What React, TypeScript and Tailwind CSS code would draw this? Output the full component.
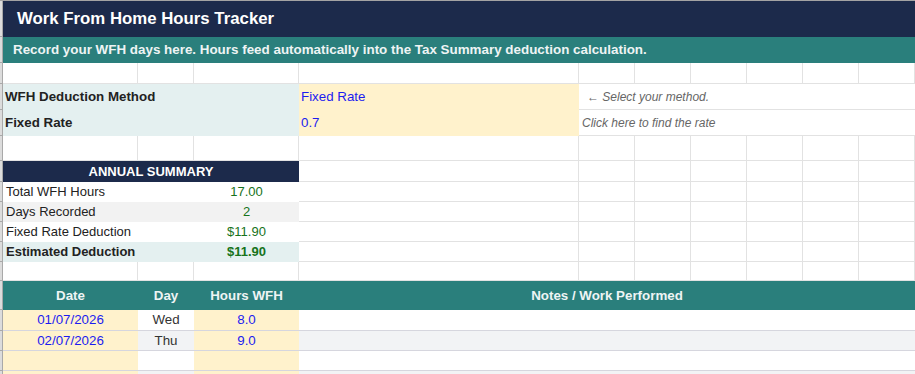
import type { ReactNode } from "react";

const GRID = "border-r border-b border-[#e2e2e2]";

function Frame() {
  // cut-off row header strip on the left edge
  return <div className="bg-[#dcdcdc] border-r border-b border-[#a9a9a9]" />;
}

function Blank() {
  return <div className={GRID} />;
}

function RestGrid() {
  // columns E..J
  return (
    <>
      <Blank />
      <Blank />
      <Blank />
      <Blank />
      <Blank />
      <Blank />
    </>
  );
}

function EmptyRow() {
  return (
    <>
      <Frame />
      <Blank />
      <Blank />
      <Blank />
      <Blank />
      <RestGrid />
    </>
  );
}

function SummaryRow({
  label,
  value,
  bg,
  bold,
}: {
  label: string;
  value: string;
  bg: string;
  bold?: boolean;
}) {
  return (
    <>
      <Frame />
      <div className={`col-span-2 flex items-center pl-[3px] text-[13px] text-[#222] ${bg} ${bold ? "font-bold" : ""}`}>
        {label}
      </div>
      <div className={`flex items-center justify-center text-[13px] text-[#17731b] ${bg} ${bold ? "font-bold" : ""}`}>
        {value}
      </div>
      <Blank />
      <RestGrid />
    </>
  );
}

function DataRow({
  date,
  day,
  hours,
  alt,
}: {
  date?: string;
  day?: string;
  hours?: string;
  alt?: boolean;
}) {
  const line = "border-b border-[#d6d6de]";
  const plain = alt ? "bg-[#f2f3f5]" : "bg-white";
  return (
    <>
      <Frame />
      <div className={`flex items-center justify-center bg-[#fff2cc] text-[13.33px] text-[#1c1cf0] ${line}`}>{date}</div>
      <div className={`flex items-center justify-center text-[13.33px] text-[#333] ${plain} ${line}`}>{day}</div>
      <div className={`flex items-center justify-center bg-[#fff2cc] text-[13.33px] text-[#1c1cf0] ${line}`}>{hours}</div>
      <div className={`col-span-7 ${plain} ${line}`} />
    </>
  );
}

function Cell({ className, children }: { className: string; children?: ReactNode }) {
  return <div className={className}>{children}</div>;
}

export default function App() {
  return (
    <div
      className="w-[915px] h-[374px] overflow-hidden bg-white border-t border-[#a3a3a3]"
      style={{ fontFamily: '"Liberation Sans", Arial, sans-serif' }}
    >
      <div className="grid grid-cols-[3px_135px_56px_105px_280px_repeat(6,56px)] grid-rows-[36px_26px_21px_26px_26px_25px_21px_20px_20px_20px_20px_19px_29px_21px_20px_20px_20px]">
        {/* Title */}
        <Frame />
        <Cell className="col-span-10 flex items-center pl-[14px] bg-[#1c2a4b] text-[16.8px] font-bold text-white">
          Work From Home Hours Tracker
        </Cell>

        {/* Subtitle */}
        <Frame />
        <Cell className="col-span-10 flex items-center pl-[10px] bg-[#2a7f7c] text-[13.4px] font-bold text-[#eef4f4]">
          Record your WFH days here. Hours feed automatically into the Tax Summary deduction calculation.
        </Cell>

        <EmptyRow />

        {/* Method */}
        <Frame />
        <Cell className="col-span-3 flex items-center pl-[2px] bg-[#e4f0f0] text-[13.33px] font-bold text-[#222]">
          WFH Deduction Method
        </Cell>
        <Cell className="flex items-center pl-[2px] bg-[#fff2cc] text-[13.33px] text-[#1c1cf0]">Fixed Rate</Cell>
        <Cell className="col-span-6 flex items-center pl-[8px] border-b border-[#e2e2e2] text-[12px] italic text-[#666]">
          ← Select your method.
        </Cell>

        {/* Fixed rate */}
        <Frame />
        <Cell className="col-span-3 flex items-center pl-[2px] bg-[#e4f0f0] text-[13.33px] font-bold text-[#222]">
          Fixed Rate
        </Cell>
        <Cell className="flex items-center pl-[2px] bg-[#fff2cc] text-[13.33px] text-[#1c1cf0]">0.7</Cell>
        <Cell className="col-span-6 flex items-center pl-[3px] border-b border-[#e2e2e2] text-[12px] italic text-[#666]">
          Click here to find the rate
        </Cell>

        <EmptyRow />

        {/* Annual summary */}
        <Frame />
        <Cell className="col-span-3 flex items-center justify-center bg-[#1c2a4b] text-[13px] font-bold text-white">
          ANNUAL SUMMARY
        </Cell>
        <Blank />
        <RestGrid />

        <SummaryRow label="Total WFH Hours" value="17.00" bg="bg-white" />
        <SummaryRow label="Days Recorded" value="2" bg="bg-[#f2f2f2]" />
        <SummaryRow label="Fixed Rate Deduction" value="$11.90" bg="bg-white" />
        <SummaryRow label="Estimated Deduction" value="$11.90" bg="bg-[#e4f0f0]" bold />

        <EmptyRow />

        {/* Table header */}
        <Frame />
        <Cell className="flex items-center justify-center bg-[#2a7f7c] text-[13.33px] font-bold text-[#eef4f4]">Date</Cell>
        <Cell className="flex items-center justify-center bg-[#2a7f7c] text-[13.33px] font-bold text-[#eef4f4]">Day</Cell>
        <Cell className="flex items-center justify-center bg-[#2a7f7c] text-[13.33px] font-bold text-[#eef4f4]">Hours WFH</Cell>
        <Cell className="col-span-7 flex items-center justify-center bg-[#2a7f7c] text-[13.33px] font-bold text-[#eef4f4]">
          Notes / Work Performed
        </Cell>

        <DataRow date="01/07/2026" day="Wed" hours="8.0" />
        <DataRow date="02/07/2026" day="Thu" hours="9.0" alt />
        <DataRow />
        <DataRow alt />
      </div>
    </div>
  );
}
